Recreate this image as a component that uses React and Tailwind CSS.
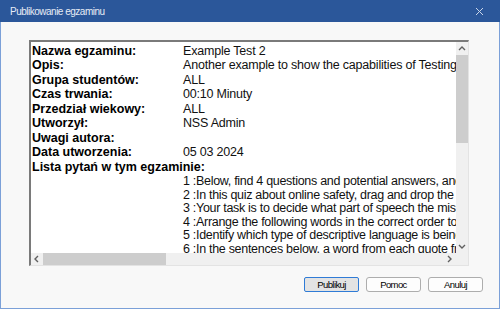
import React from 'react';

const details = [
  ['Nazwa egzaminu:', 'Example Test 2'],
  ['Opis:', 'Another example to show the capabilities of Testing Software'],
  ['Grupa studentów:', 'ALL'],
  ['Czas trwania:', '00:10 Minuty'],
  ['Przedział wiekowy:', 'ALL'],
  ['Utworzył:', 'NSS Admin'],
  ['Uwagi autora:', ''],
  ['Data utworzenia:', '05 03 2024'],
];

const questions = [
  '1 :Below, find 4 questions and potential answers, and choose the correct one',
  '2 :In this quiz about online safety, drag and drop the right answers',
  '3 :Your task is to decide what part of speech the missing word is',
  '4 :Arrange the following words in the correct order to make a sentence',
  '5 :Identify which type of descriptive language is being used',
  '6 :In the sentences below, a word from each quote from the text is missing',
];

const Chevron = ({ dir }) => {
  const paths = {
    up: 'M1 5 L4 2 L7 5',
    down: 'M1 2 L4 5 L7 2',
    left: 'M5 1 L2 4 L5 7',
    right: 'M2 1 L5 4 L2 7',
  };
  return (
    <svg width="8" height="8" viewBox="0 0 8 8">
      <path d={paths[dir]} fill="none" stroke="#606060" strokeWidth="1.4" />
    </svg>
  );
};

const Button = ({ children, primary }) => (
  <button
    className={
      primary
        ? 'w-[55px] h-[15px] rounded-[2px] border border-[#2f7bd6] bg-[#e3e3e3] text-[9.5px] tracking-[-0.6px] text-black leading-none'
        : 'w-[55px] h-[15px] rounded-[3px] border border-[#adadad] bg-[#fdfdfd] text-[9.5px] tracking-[-0.6px] text-black leading-none'
    }
  >
    {children}
  </button>
);

export default function App() {
  return (
    <div className="w-[500px] h-[309px] flex flex-col bg-[#f8f8f8] font-['Liberation_Sans',Arial,sans-serif] overflow-hidden">
      {/* title bar */}
      <div className="h-[22px] shrink-0 bg-[#2b579a] flex items-center justify-between pl-[10px] pr-[16px]">
        <span className="text-[10px] tracking-[-0.5px] text-[#e6ecf5]">Publikowanie egzaminu</span>
        <svg width="9" height="9" viewBox="0 0 9 9">
          <path d="M1 1 L8 8 M8 1 L1 8" stroke="#c9d5e8" strokeWidth="1" />
        </svg>
      </div>

      <div className="flex-1 flex flex-col border-x border-b border-[#7ba0d8] pl-[28px] pt-[18px]">
        {/* sunken report box */}
        <div className="w-[440px] h-[226px] border-t-2 border-l-2 border-[#7a7a7a] border-r border-b border-r-[#e3e3e3] border-b-[#e3e3e3] grid grid-cols-[1fr_12px] grid-rows-[1fr_12px]">
          <div className="bg-white overflow-hidden whitespace-nowrap pl-px pt-[1.5px] text-black">
            {details.map(([label, value]) => (
              <div key={label} className="flex leading-[14.5px]">
                <span className="w-[151px] shrink-0 font-bold text-[12.5px]">{label}</span>
                <span className="text-[12.5px] tracking-[-0.2px] text-[#111]">{value}</span>
              </div>
            ))}
            <div className="font-bold text-[12.5px] leading-[14.5px]">Lista pytań w tym egzaminie:</div>
            <div className="mt-px pl-[151px]">
              {questions.map((q) => (
                <div key={q} className="text-[12.5px] tracking-[-0.3px] leading-[13.6px] text-[#111]">
                  {q}
                </div>
              ))}
            </div>
          </div>

          {/* vertical scrollbar */}
          <div className="bg-[#f0f0f0] flex flex-col">
            <div className="h-[13px] flex items-center justify-center">
              <Chevron dir="up" />
            </div>
            <div className="h-[88px] bg-[#cdcdcd]" />
            <div className="flex-1" />
            <div className="h-[13px] flex items-center justify-center">
              <Chevron dir="down" />
            </div>
          </div>

          {/* horizontal scrollbar */}
          <div className="bg-[#f0f0f0] flex items-center">
            <div className="w-[12px] h-full flex items-center justify-center">
              <Chevron dir="left" />
            </div>
            <div className="w-[123px] h-full bg-[#cdcdcd]" />
            <div className="flex-1" />
            <div className="w-[12px] h-full flex items-center justify-center">
              <Chevron dir="right" />
            </div>
          </div>
          <div className="bg-[#f0f0f0]" />
        </div>

        {/* buttons */}
        <div className="mt-[11px] flex justify-end gap-[7px] pr-[16px]">
          <Button primary>Publikuj</Button>
          <Button>Pomoc</Button>
          <Button>Anuluj</Button>
        </div>
      </div>
    </div>
  );
}
